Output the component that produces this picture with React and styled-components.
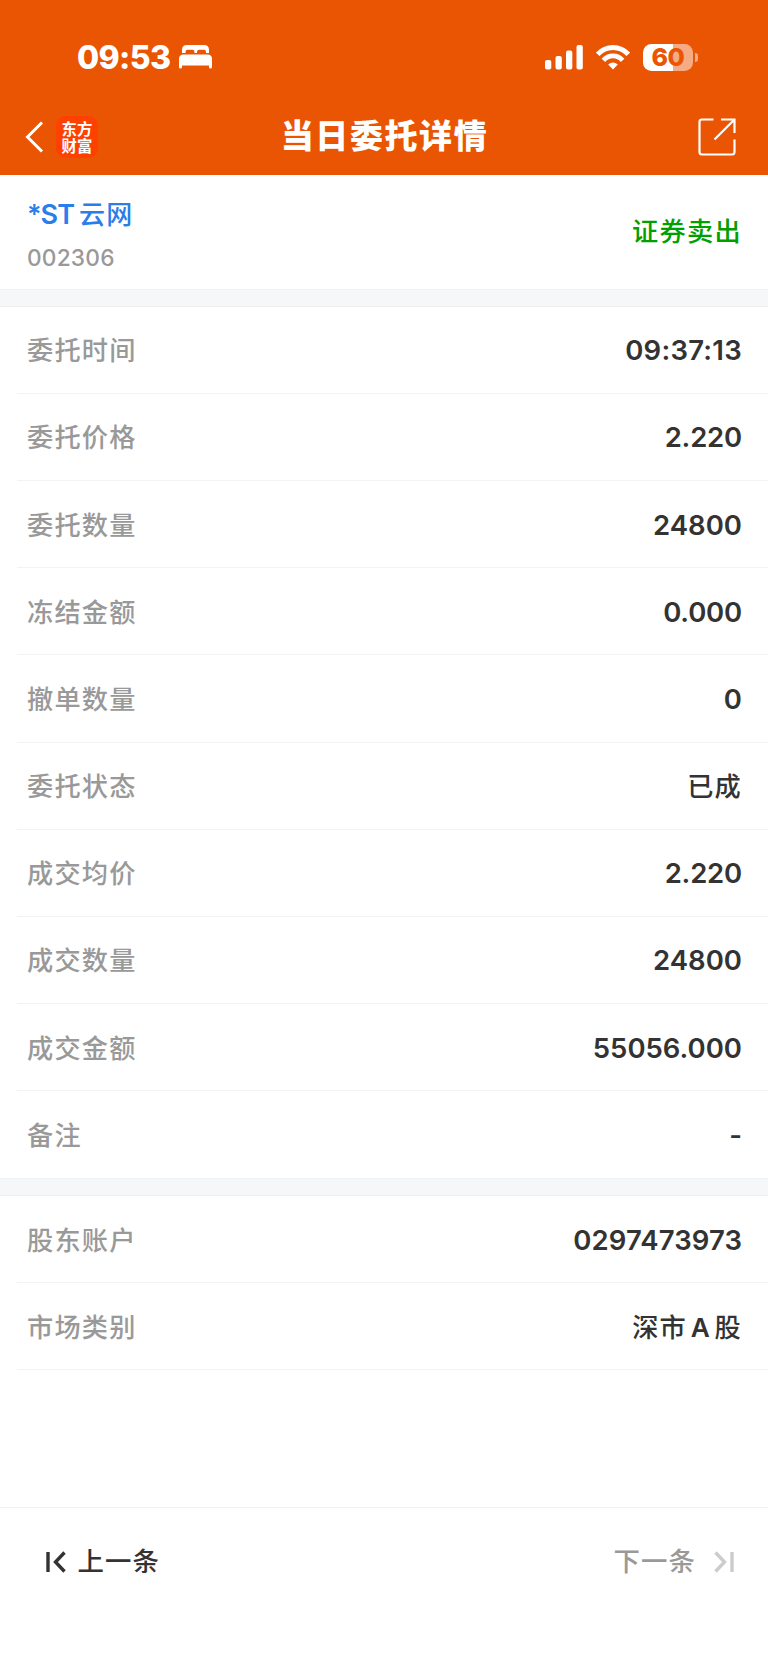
import React from 'react';
import styled, { createGlobalStyle } from 'styled-components';

const GlobalStyle = createGlobalStyle`
  * {
    box-sizing: border-box;
  }

  body {
    margin: 0;
    background: #fff;
    color: #333;
    font-family: Inter, 'Noto Sans CJK SC', sans-serif;
  }

  svg {
    display: block;
    flex: none;
  }
`;

const Page = styled.div`
  display: flex;
  flex-direction: column;
  width: 768px;
  height: 1669px;
  overflow: hidden;
  background: #fff;
`;

const Header = styled.header`
  height: 175.4px;
  background: #ea5504;
  color: #fff;
`;

const StatusBar = styled.div`
  display: flex;
  align-items: center;
  height: 98px;
  padding: 16px 70px 0 77px;
`;

const Clock = styled.span`
  width: 94px;
  margin: 1px 8px 0 0;
  font-size: 32px;
  font-weight: 800;
  line-height: 40px;
  letter-spacing: -0.6px;
  white-space: nowrap;
`;

const StatusIcons = styled.div`
  display: flex;
  align-items: center;
  margin-left: auto;
`;

const Signal = styled.svg`
  margin-right: 13px;
`;

const Battery = styled.div`
  display: flex;
  align-items: center;
  margin-left: 13px;
`;

const BatteryBody = styled.div`
  width: 50px;
  height: 27px;
  border-radius: 8.5px;
  background: linear-gradient(
    90deg,
    #fff ${props => props.level}%,
    #f5ab84 ${props => props.level}%
  );
  color: #ea5504;
  font-size: 25px;
  font-weight: 800;
  line-height: 27px;
  letter-spacing: -0.5px;
  text-align: center;
`;

const BatteryTip = styled.div`
  width: 3px;
  height: 9px;
  margin-left: 2px;
  border-radius: 0 4px 4px 0;
  background: #f5ab84;
`;

const NavBar = styled.div`
  display: grid;
  grid-template-columns: 200px 1fr 200px;
  align-items: center;
  height: 77px;
  padding: 1px 32px 0 25px;
`;

const NavLeft = styled.div`
  display: flex;
  align-items: center;
  gap: 12px;
`;

const Logo = styled.div`
  display: flex;
  flex-direction: column;
  width: 42px;
  height: 42px;
  padding: 4px 0 0 5.5px;
  border-radius: 9px;
  background: #ff4100;
  font-family: 'Noto Sans CJK SC', sans-serif;
  font-size: 15.4px;
  font-weight: 700;
  line-height: 17px;
`;

const Title = styled.h1`
  margin: 0 0 2px 8px;
  font-size: 33px;
  font-weight: 900;
  line-height: 44px;
  letter-spacing: 1.6px;
  text-align: center;
  white-space: nowrap;
`;

const NavRight = styled.div`
  display: flex;
  justify-content: flex-end;
`;

const Stock = styled.section`
  display: flex;
  justify-content: space-between;
  height: 113.6px;
  padding: 21px 26px 0 27px;
`;

const StockName = styled.div`
  display: flex;
  gap: 5px;
  color: #2b7de9;
  font-size: 26px;
  font-weight: 500;
  line-height: 38px;
  letter-spacing: 1.2px;
`;

const Ticker = styled.span`
  font-size: 27px;
  font-weight: 600;
  letter-spacing: -1px;
`;

const StockCode = styled.div`
  margin-top: 7px;
  color: #999;
  font-size: 22.7px;
  font-weight: 500;
  line-height: 34px;
  letter-spacing: 0.2px;
`;

const Side = styled.div`
  margin-top: 17px;
  color: #00a000;
  font-size: 26.2px;
  font-weight: 500;
  line-height: 38px;
  letter-spacing: 1.3px;
`;

const Band = styled.div`
  height: 17.6px;
  border-top: 1px solid #f0f1f3;
  border-bottom: 1px solid #eeeff1;
  background: #f6f7f9;
`;

const Row = styled.div`
  display: flex;
  align-items: center;
  justify-content: space-between;
  height: 87.2px;
  margin-left: ${props => (props.$last ? 0 : 17)}px;
  padding: 0 26px 0 ${props => (props.$last ? 27 : 10)}px;
  border-bottom: ${props => (props.$last ? 0 : 1)}px solid #f3f3f4;
`;

const Label = styled.span`
  padding-bottom: 1px;
  color: #999;
  font-size: 26.2px;
  font-weight: 500;
  letter-spacing: 1.2px;
`;

const Value = styled.span`
  padding-${props => (props.$text ? 'bottom' : 'top')}: 1px;
  font-size: ${props => (props.$text ? 26.2 : 27.5)}px;
  font-weight: ${props => (props.$text ? 500 : 600)};
  letter-spacing: ${props => props.$tracking ?? (props.$text ? 1.2 : 0)}px;
  word-spacing: -4.5px;
`;

const Latin = styled.span`
  font-weight: 600;
`;

const Footer = styled.footer`
  display: flex;
  justify-content: space-between;
  height: 162px;
  margin-top: auto;
  padding: 34px 33px 0 44.5px;
  border-top: 1px solid #f0f0f0;
`;

const PageButton = styled.button`
  display: flex;
  align-items: center;
  gap: ${props => props.$gap}px;
  height: 40px;
  padding: 0;
  border: 0;
  background: none;
  color: ${props => (props.disabled ? '#999' : '#333')};
  font-family: inherit;
  font-size: 26.4px;
  font-weight: 500;
  letter-spacing: 1.1px;

  span {
    padding-bottom: 5px;
  }
`;

const orderRows = [
  { label: '委托时间', value: '09:37:13', tracking: 0.25 },
  { label: '委托价格', value: '2.220', tracking: -0.2 },
  { label: '委托数量', value: '24800' },
  { label: '冻结金额', value: '0.000', tracking: -0.2 },
  { label: '撤单数量', value: '0' },
  { label: '委托状态', value: '已成', text: true },
  { label: '成交均价', value: '2.220', tracking: -0.2 },
  { label: '成交数量', value: '24800' },
  { label: '成交金额', value: '55056.000' },
  { label: '备注', value: '-' },
];

const accountRows = [
  { label: '股东账户', value: '0297473973', tracking: 0.1 },
  {
    label: '市场类别',
    value: (
      <>
        深市 <Latin>A</Latin> 股
      </>
    ),
    text: true,
  },
];

const BedIcon = () => (
  <svg width="33" height="24" viewBox="0 0 33 24" fill="#fff">
    <path d="M3 8V5Q3 0 8 0H25Q30 0 30 5V8H27V7Q27 4.800 25 4.800H20Q18 4.800 18 7V8H15.500V7Q15.500 4.800 13.500 4.800H8.500Q6.500 4.800 6.500 7V8Z" />
    <path d="M0 14Q0 9.500 4.500 9.500H28.500Q33 9.500 33 14V22Q33 23.500 31.500 23.500T30 22V20.500H3V22Q3 23.500 1.500 23.500T0 22Z" />
  </svg>
);

const SignalIcon = () => (
  <Signal width="38" height="25" viewBox="0 0 38 25" fill="#fff">
    <rect x="0" y="15" width="6.300" height="9.500" rx="2" />
    <rect x="10.500" y="11" width="6.300" height="13.500" rx="2" />
    <rect x="21" y="5.500" width="6.300" height="19" rx="2" />
    <rect x="31.500" y="0" width="6.300" height="24.500" rx="2" />
  </Signal>
);

const WifiIcon = () => (
  <svg width="34" height="25" viewBox="0 0 34 25" fill="none" stroke="#fff" strokeWidth="4.800">
    <path d="M1.700 9.300C10 .2 24 .2 32.300 9.300" />
    <path d="M7.400 15.300C12.500 9.500 21.500 9.500 26.600 15.300" />
    <path d="M17 24.500L12.200 19.500Q17 15.300 21.800 19.500Z" fill="#fff" stroke="none" />
  </svg>
);

const BackIcon = () => (
  <svg width="19" height="32" viewBox="0 0 19 32" fill="none" stroke="#fff" strokeWidth="3">
    <path d="M17 1.500L2.500 16L17 30.500" />
  </svg>
);

const ShareIcon = () => (
  <svg width="38" height="38" viewBox="0 0 38 38" fill="none" stroke="#fff" strokeWidth="2.200">
    <path d="M15.500 1.500H4Q1.500 1.500 1.500 4V34Q1.500 36.500 4 36.500H34Q36.500 36.500 36.500 34V21.500" />
    <path d="M23 1.500H36.500V15M36.500 1.500L16.500 21.500" />
  </svg>
);

const FirstIcon = () => (
  <svg width="21" height="22" viewBox="0 0 21 22" fill="none" stroke="#333" strokeWidth="3.400">
    <path d="M3 1V21M19.500 1.500L10.500 11L19.500 20.500" />
  </svg>
);

const LastIcon = () => (
  <svg width="21" height="22" viewBox="0 0 21 22" fill="none" stroke="#ccc" strokeWidth="3.400">
    <path d="M18 1V21M1.500 1.500L10.500 11L1.500 20.500" />
  </svg>
);

const Rows = ({ items, openEnd }) =>
  items.map((item, i) => (
    <Row key={item.label} $last={!openEnd && i === items.length - 1}>
      <Label>{item.label}</Label>
      <Value $text={item.text} $tracking={item.tracking}>
        {item.value}
      </Value>
    </Row>
  ));

const App = () => (
  <Page>
    <GlobalStyle />
    <Header>
      <StatusBar>
        <Clock>09:53</Clock>
        <BedIcon />
        <StatusIcons>
          <SignalIcon />
          <WifiIcon />
          <Battery>
            <BatteryBody level={60}>60</BatteryBody>
            <BatteryTip />
          </Battery>
        </StatusIcons>
      </StatusBar>
      <NavBar>
        <NavLeft>
          <BackIcon />
          <Logo>
            <span>东方</span>
            <span>财富</span>
          </Logo>
        </NavLeft>
        <Title>当日委托详情</Title>
        <NavRight>
          <ShareIcon />
        </NavRight>
      </NavBar>
    </Header>
    <Stock>
      <div>
        <StockName>
          <Ticker>*ST</Ticker>
          <span>云网</span>
        </StockName>
        <StockCode>002306</StockCode>
      </div>
      <Side>证券卖出</Side>
    </Stock>
    <Band />
    <Rows items={orderRows} />
    <Band />
    <Rows items={accountRows} openEnd />
    <Footer>
      <PageButton $gap={12}>
        <FirstIcon />
        <span>上一条</span>
      </PageButton>
      <PageButton $gap={18} disabled>
        <span>下一条</span>
        <LastIcon />
      </PageButton>
    </Footer>
  </Page>
);

export default App;
